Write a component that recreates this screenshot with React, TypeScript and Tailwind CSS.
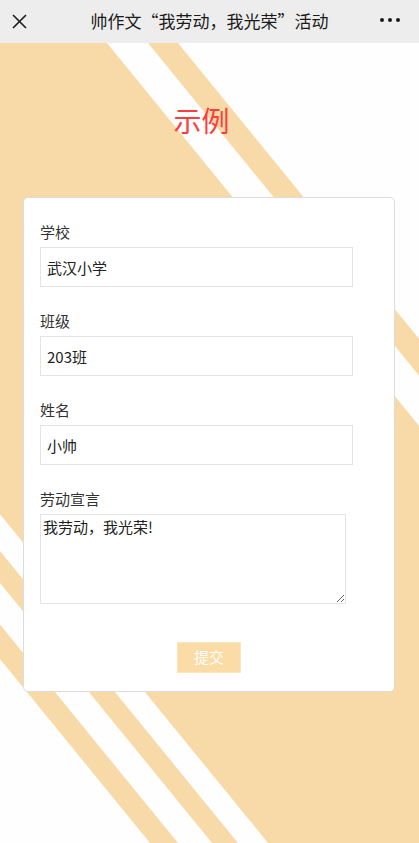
import React from 'react';

const fields = [
  { label: '学校', value: '武汉小学' },
  { label: '班级', value: '203班' },
  { label: '姓名', value: '小帅' },
];

const Stripes = () => (
  <svg
    className="absolute inset-0 h-full w-full"
    viewBox="0 0 419 800"
    preserveAspectRatio="none"
  >
    <rect width="419" height="800" fill="#f8daa8" />
    <polygon points="0,616 150,800 0,800" fill="#fefefe" />
    <polygon points="-474,0 -440,0 212,800 178,800" fill="#fefefe" />
    <polygon points="-414,0 -384,0 268,800 238,800" fill="#fefefe" />
    <polygon points="107,0 148,0 800,800 759,800" fill="#fefefe" />
    <polygon points="178,0 1000,0 1000,800 830,800" fill="#fefefe" />
  </svg>
);

const Header = () => (
  <div className="grid h-[43px] grid-cols-[48px_1fr_48px] items-center bg-[#ededed] text-[#1a1a1a]">
    <svg className="ml-[12px] h-[15px] w-[15px]" viewBox="0 0 15 15">
      <path d="M1 1 L14 14 M14 1 L1 14" stroke="#1a1a1a" strokeWidth="1.6" fill="none" />
    </svg>
    <div className="text-center text-[17px] leading-[24px] pb-[2px]">帅作文“我劳动，我光荣”活动</div>
    <div className="flex items-center justify-end gap-[4px] pr-[19px] pb-[4px]">
      <span className="h-[4px] w-[4px] rounded-full bg-[#1a1a1a]" />
      <span className="h-[4px] w-[4px] rounded-full bg-[#1a1a1a]" />
      <span className="h-[4px] w-[4px] rounded-full bg-[#1a1a1a]" />
    </div>
  </div>
);

export default function App() {
  return (
    <div className="w-[419px] font-['Noto_Sans_CJK_SC',sans-serif] text-[#333]">
      <Header />
      <main className="relative h-[800px] overflow-hidden">
        <Stripes />
        <div className="relative flex flex-col">
          <h1 className="pt-[60px] pr-[16px] text-center text-[28px] font-normal leading-[34px] text-[#ff3c3c]">
            示例
          </h1>
          <form className="mt-[60px] ml-[23px] flex w-[372px] flex-col rounded-[5px] border border-[#dcdcdc] bg-white px-[16px] pt-[23px] pb-[18px]">
            {fields.map((f, i) => (
              <div key={f.label} className={i > 0 ? 'mt-[23px]' : ''}>
                <label className="block text-[15px] leading-[22px] text-[#333]">{f.label}</label>
                <input
                  readOnly
                  value={f.value}
                  className="mt-[4px] block h-[40px] w-[313px] border border-[#e4e4e4] bg-white pl-[6px] text-[15px] text-[#222] outline-none"
                />
              </div>
            ))}
            <div className="mt-[23px]">
              <label className="block text-[15px] leading-[22px] text-[#333]">劳动宣言</label>
              <textarea
                readOnly
                value="我劳动，我光荣!"
                className="mt-[4px] block h-[90px] w-[306px] border border-[#e4e4e4] bg-white p-[2px] text-[15px] leading-[20px] text-[#222] outline-none"
              />
            </div>
            <button
              type="button"
              className="mx-auto mt-[38px] h-[31px] w-[64px] border border-[#fde6bf] bg-[#fbdba6] text-[15px] text-white"
            >
              提交
            </button>
          </form>
        </div>
      </main>
    </div>
  );
}
